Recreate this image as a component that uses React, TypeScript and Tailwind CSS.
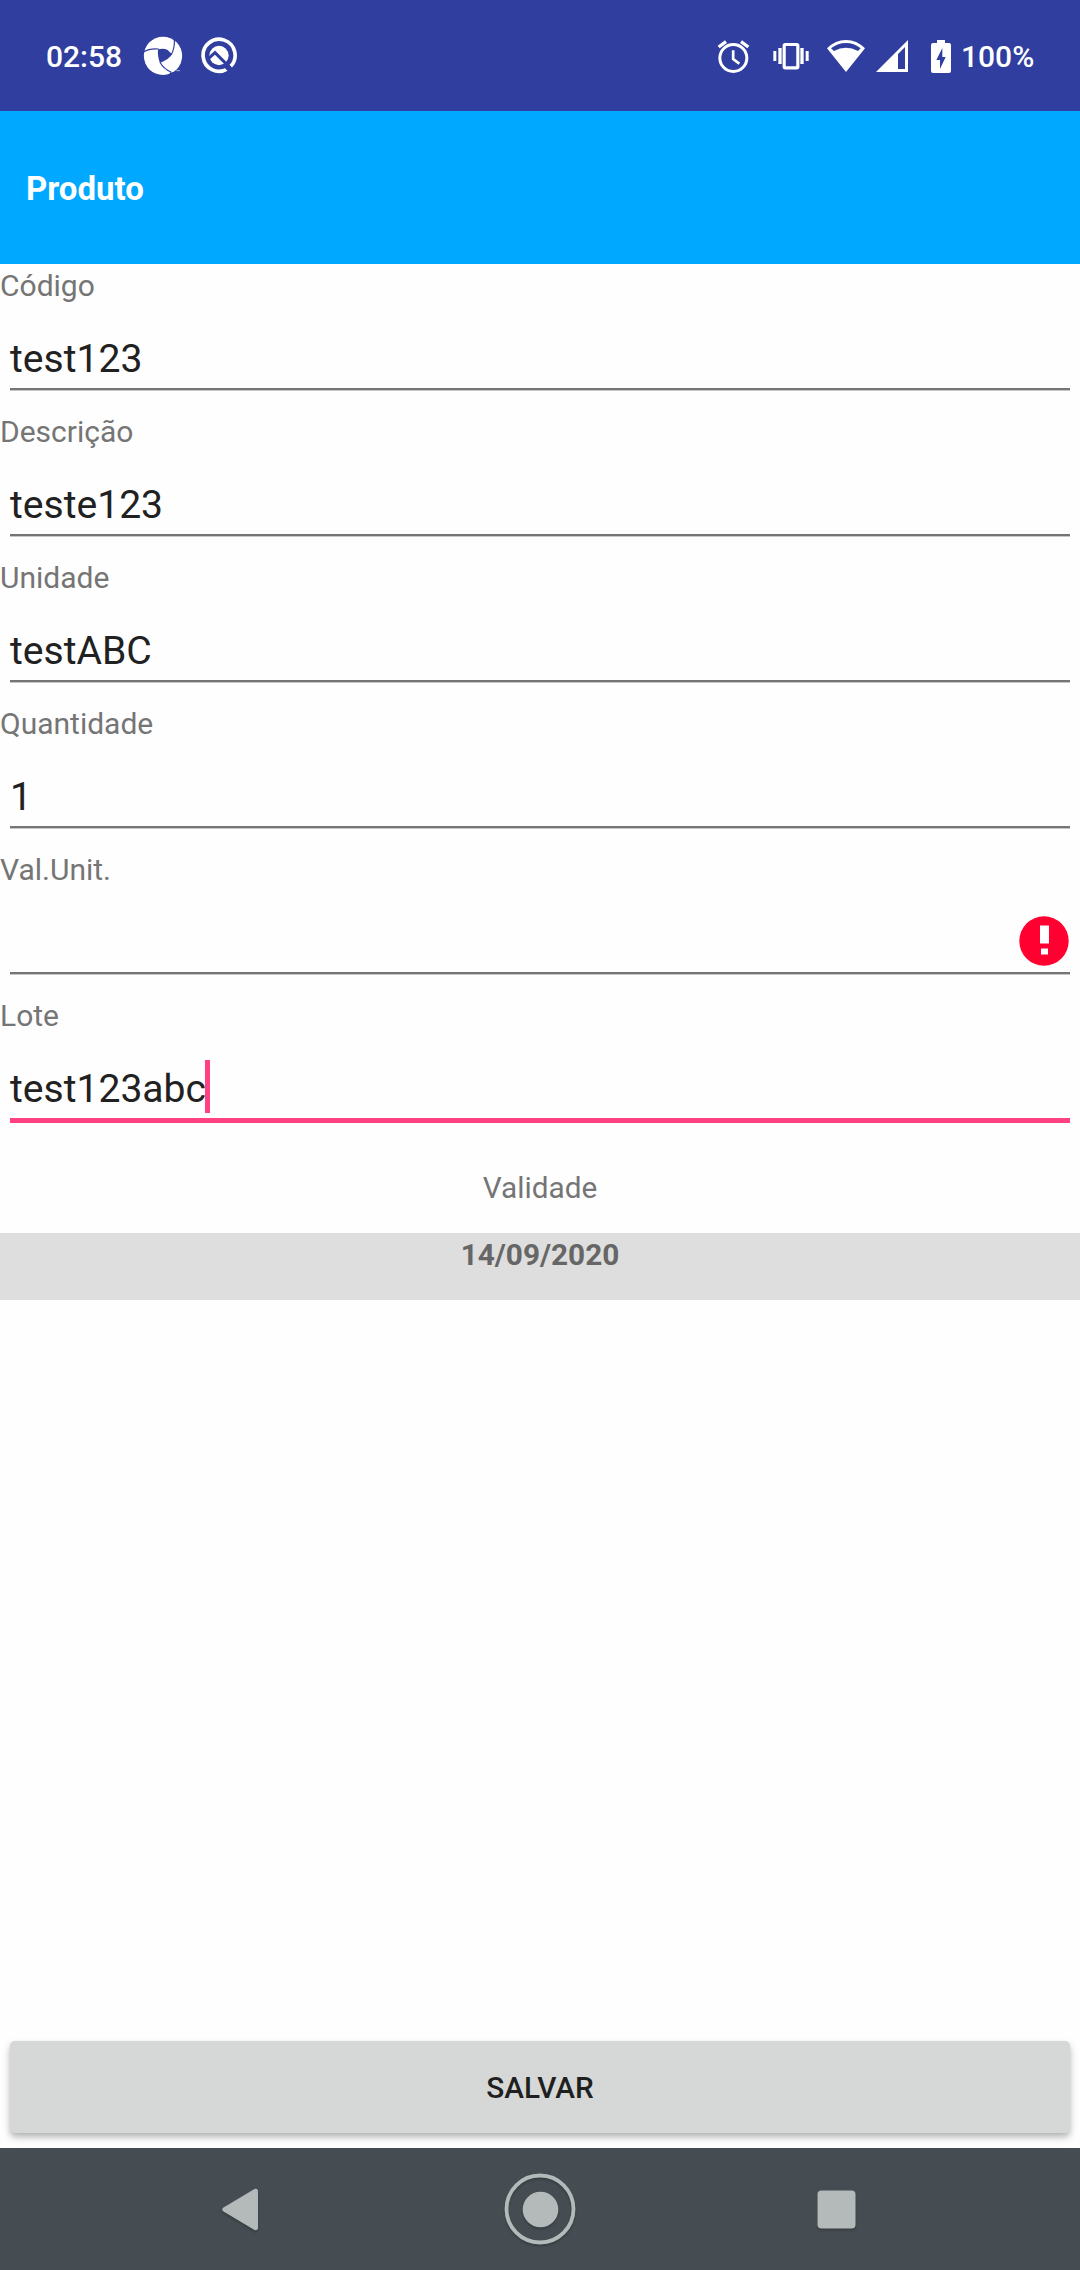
import React from "react";

function ApertureIcon() {
  return (
    <svg className="h-10 w-10" viewBox="429 108 120 120">
      <circle cx="489" cy="167.5" r="57.5" fill="#fff" />
      <path d="M474 148Q490 143 503 150L516 163Q510 176 480 189Q472 170 474 148Z" fill="#303f9f" />
      <path d="M430 156Q450 144 476 147M523 118Q525 142 514 164M480 187Q490 206 514 217" fill="none" stroke="#303f9f" strokeWidth="3.5" />
      <path d="M528 214L546 210V226H506L511 217Q520 218 528 214Z" fill="#303f9f" />
      <path d="M529 212h11" stroke="#fff" strokeWidth="3" opacity=".6" />
    </svg>
  );
}

function SearchRingIcon() {
  return (
    <svg className="h-10 w-10" viewBox="597 108 120 120">
      <path d="M682 207A48 48 0 1 1 692 199" fill="none" stroke="#fff" strokeWidth="11" />
      <path d="M676 201L687 212" stroke="#303f9f" strokeWidth="7" />
      <circle cx="657" cy="166.500" r="29" fill="#fff" />
      <path d="M626 175L645 158L690 203" fill="none" stroke="#303f9f" strokeWidth="9" />
    </svg>
  );
}

function StatusIcons() {
  return (
    <svg className="h-[40px] w-[245px]" viewBox="75 105 735 120">
      <g fill="none" stroke="#fff">
        <circle cx="130" cy="171" r="40.500" strokeWidth="9" />
        <path d="M129.500 148V174L148 188" strokeWidth="8" />
        <path d="M86 138L108 122M175 138L153 122" strokeWidth="10" />
        <rect x="282.500" y="130.500" width="41" height="70" rx="3" strokeWidth="9.500" />
        <path d="M270 141V189M336 141V189" strokeWidth="10" />
        <path d="M254.500 150V180M351.500 150V180" strokeWidth="9" />
      </g>
      <path fillRule="evenodd" d="M411 142Q436 117 468 117Q500 117 525 142L468 213ZM423 142L432 150Q468 130 504 150L512 142Q492 126 468 126Q444 126 423 142Z" fill="#fff" />
      <path fillRule="evenodd" d="M558 213L654 117V213ZM624 159V204H645V138Z" fill="#fff" />
      <path fillRule="evenodd" d="M741 117H765V126H777Q783 126 783 132V210Q783 216 777 216H729Q723 216 723 210V132Q723 126 729 126H741ZM757 141L739 177H750V204L767 168H757Z" fill="#fff" />
    </svg>
  );
}

type FieldProps = { label: string; value: string; active?: boolean; error?: boolean };

function Field({ label, value, active, error }: FieldProps) {
  return (
    <div className="h-[146px]">
      <div className="h-10 pt-[2px] text-[30px] leading-10 text-[#757575]">{label}</div>
      <div className="relative mx-[10px] h-[106px]">
        <div className="flex h-[84px] items-center pt-[24px]">
          <span className="pt-[2px] text-[39.1px] leading-[50px] text-[#212121]">{value}</span>
          {active && <span className="-mt-1 -ml-px h-[53px] w-[5px] bg-[#ff4081]" />}
        </div>
        {active ? (
          <div className="h-[5px] w-full bg-[#ff4081]" />
        ) : (
          <div className="h-[3px] w-full border-b border-[#c8c8c8] bg-[#757575]" />
        )}
        {error && (
          <svg className="absolute top-[28px] right-[1px] h-[50px] w-[50px]" viewBox="0 0 50 50">
            <circle cx="25" cy="25" r="24.700" fill="#ff0030" />
            <path d="M21 9.500h9v18h-9zM22 32.500h7v6h-7z" fill="#fff" />
          </svg>
        )}
      </div>
    </div>
  );
}

export default function App() {
  return (
    <div className="flex h-[2270px] w-[1080px] flex-col bg-[#fefefe] font-['Roboto',sans-serif]">
      <header className="flex h-[111px] shrink-0 items-center bg-[#303f9f] text-[30px] font-medium text-white">
        <span className="ml-[46px] w-[97px] pt-[2px]">02:58</span>
        <ApertureIcon />
        <span className="w-4" />
        <SearchRingIcon />
        <span className="flex-1" />
        <StatusIcons />
        <span className="ml-px w-[119px] pt-[2px]">100%</span>
      </header>
      <div className="flex h-[153px] shrink-0 items-center bg-[#00a9ff] pt-[2px] pl-[26px] text-[33px] font-bold text-white">
        Produto
      </div>
      <main className="flex flex-1 flex-col">
        <Field label="Código" value="test123" />
        <Field label="Descrição" value="teste123" />
        <Field label="Unidade" value="testABC" />
        <Field label="Quantidade" value="1" />
        <Field label="Val.Unit." value="" error />
        <Field label="Lote" value="test123abc" active />
        <div className="h-[93px] pt-[28px] text-center text-[29.75px] leading-[40px] text-[#757575]">Validade</div>
        <div className="h-[67px] bg-[#dedede] pt-px text-center text-[29.75px] leading-[42px] font-bold text-[#666]">14/09/2020</div>
        <button className="mx-[10px] mt-auto mb-[15px] h-[92px] rounded-[5px] bg-[#d6d8d7] pt-[2px] text-[29.75px] font-medium text-[#1f1f1f] shadow-[0_4px_7px_rgba(0,0,0,0.3)]">
          SALVAR
        </button>
      </main>
      <nav className="z-10 flex h-[122px] shrink-0 justify-center bg-[#454d53]">
        <svg className="h-[122px] w-[660px]" viewBox="210 0 660 122">
          <g fill="#b4b9ba" style={{ filter: "drop-shadow(0 2px 1px rgba(0,0,0,.2))" }}>
            <path d="M223.500 59.500L254.500 41Q258 40 258 44V79Q258 83 254.500 82L223.500 63.500Q221 61.500 223.500 59.500Z" />
            <circle cx="540.500" cy="61.500" r="17.800" />
            <circle cx="540" cy="61" r="33.500" fill="none" stroke="#b4b9ba" strokeWidth="3.800" />
            <rect x="817.500" y="42.500" width="38" height="38" rx="4" />
          </g>
        </svg>
      </nav>
    </div>
  );
}
